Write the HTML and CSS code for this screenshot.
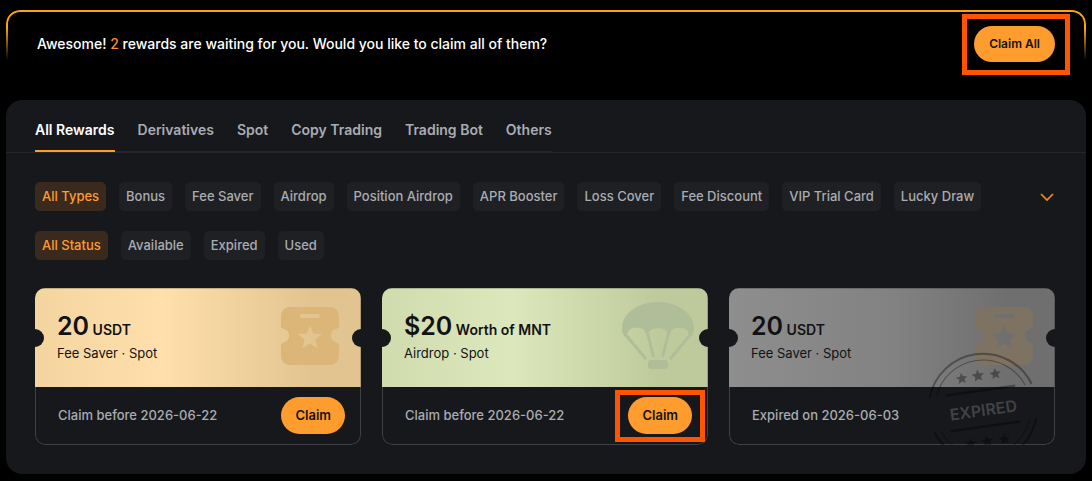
FILE: index.html
```html
<!DOCTYPE html>
<html lang="en">
<head>
    <meta charset="UTF-8">
    <meta name="viewport" content="width=device-width, initial-scale=1.0">
    <title>My Rewards</title>
    <link rel="stylesheet" href="styles.css">
</head>
<body>

    <!-- Shared shapes -->
    <svg class="shapes" width="0" height="0" aria-hidden="true">
        <symbol id="ticket" viewBox="0 0 58 58">
            <path fill-rule="evenodd" d="M9 0H49C54 0 58 4 58 9V19C58 21 57 21.500 55 22C48 24 48 33 55 35.500C57 36 58 37 58 39V49C58 54 54 58 49 58H9C4 58 0 54 0 49V39C0 37 1 36 3 35.500C10 33 10 24 3 22C1 21.500 0 21 0 19V9C0 4 4 0 9 0ZM21 7C18.500 7 18.500 11 21 11H37C39.500 11 39.500 7 37 7ZM29 18.500L32.300 26.500L40.900 27.100L34.400 32.700L36.400 41.100L29 36.600L21.600 41.100L23.600 32.700L17.100 27.100L25.700 26.500Z"/>
        </symbol>
        <symbol id="star" viewBox="-10 -10 20 20">
            <path d="M0 -10L2.650 -3.640L9.510 -3.090L4.280 1.390L5.880 8.090L0 4.500L-5.880 8.090L-4.280 1.390L-9.510 -3.090L-2.650 -3.640Z"/>
        </symbol>
    </svg>

    <section class="banner">
        <p>Awesome! <span class="count">2</span> rewards are waiting for you. Would you like to claim all of them?</p>
        <div class="marked marked-all">
            <button type="button" class="claim claim-all">Claim All</button>
        </div>
    </section>

    <main class="panel">
        <nav class="tabs">
            <div class="tab-list">
                <button type="button" class="tab active">All Rewards</button>
                <button type="button" class="tab">Derivatives</button>
                <button type="button" class="tab">Spot</button>
                <button type="button" class="tab">Copy Trading</button>
                <button type="button" class="tab">Trading Bot</button>
                <button type="button" class="tab">Others</button>
            </div>
        </nav>

        <div class="filters">
            <div class="filter-row">
                <button type="button" class="chip active">All Types</button>
                <button type="button" class="chip">Bonus</button>
                <button type="button" class="chip">Fee Saver</button>
                <button type="button" class="chip">Airdrop</button>
                <button type="button" class="chip">Position Airdrop</button>
                <button type="button" class="chip">APR Booster</button>
                <button type="button" class="chip">Loss Cover</button>
                <button type="button" class="chip">Fee Discount</button>
                <button type="button" class="chip">VIP Trial Card</button>
                <button type="button" class="chip">Lucky Draw</button>
                <button type="button" class="expand" aria-label="Show more types">
                    <svg width="15" height="10" viewBox="0 0 15 10"><path d="M1 2L7 8L13 2" fill="none" stroke="#e8911a" stroke-width="1.700"/></svg>
                </button>
            </div>
            <div class="filter-row">
                <button type="button" class="chip active">All Status</button>
                <button type="button" class="chip">Available</button>
                <button type="button" class="chip">Expired</button>
                <button type="button" class="chip">Used</button>
            </div>
        </div>

        <div class="cards">
            <article class="card">
                <div class="card-top gold">
                    <div class="reward">
                        <h2><span class="amount">20</span> USDT</h2>
                        <p>Fee Saver · Spot</p>
                    </div>
                    <svg class="ticket" width="58" height="58"><use href="#ticket"/></svg>
                </div>
                <div class="card-bottom">
                    <span class="date">Claim before 2026-06-22</span>
                    <button type="button" class="claim">Claim</button>
                </div>
            </article>

            <article class="card">
                <div class="card-top green">
                    <div class="reward">
                        <h2><span class="amount">$20</span> Worth of MNT</h2>
                        <p>Airdrop · Spot</p>
                    </div>
                    <svg class="parachute" width="72" height="68" viewBox="0 0 72 68">
                        <path d="M0 26C0 12 16 0 36 0S72 12 72 26C72 30 71 33 69 35L66.400 31.500C66 24 49 24 48.500 31L46 31C44 24.500 28 24.500 26.500 31L23.500 31C23 24 6 24 5.600 31.500L3 35C1 33 0 30 0 26Z"/>
                        <path class="cables" d="M3 32L24 57M25 29L31.600 55M47 29L40.600 55M69 32L48 57"/>
                        <rect x="26" y="58" width="20" height="9" rx="3.500"/>
                    </svg>
                </div>
                <div class="card-bottom">
                    <span class="date">Claim before 2026-06-22</span>
                    <div class="marked">
                        <button type="button" class="claim">Claim</button>
                    </div>
                </div>
            </article>

            <article class="card expired">
                <div class="card-top gray">
                    <div class="reward">
                        <h2><span class="amount">20</span> USDT</h2>
                        <p>Fee Saver · Spot</p>
                    </div>
                    <svg class="ticket" width="58" height="58"><use href="#ticket"/></svg>
                </div>
                <div class="card-bottom">
                    <span class="date">Expired on 2026-06-03</span>
                </div>
                <svg class="stamp" width="112" height="112" viewBox="-56 -56 112 112">
                    <g transform="rotate(-8)">
                        <g fill="none" stroke="#000" stroke-opacity="0.350">
                            <path stroke-width="2" d="M-51.500 -17A54.200 54.200 0 0 1 51.500 -17M-51.500 17A54.200 54.200 0 0 0 51.500 17"/>
                            <path stroke-width="1" d="M-44.900 -17A48 48 0 0 1 44.900 -17M-44.900 17A48 48 0 0 0 44.900 17"/>
                            <path stroke-width="2.500" d="M-35 -17.500H35M-35 18.500H35"/>
                        </g>
                        <g fill="#000" fill-opacity="0.350">
                            <use href="#star" x="-23" y="-38" width="12" height="12"/>
                            <use href="#star" x="-7" y="-39" width="13" height="13"/>
                            <use href="#star" x="11" y="-38" width="12" height="12"/>
                            <use href="#star" x="-23" y="28" width="12" height="12"/>
                            <use href="#star" x="-7" y="27" width="13" height="13"/>
                            <use href="#star" x="11" y="28" width="12" height="12"/>
                        </g>
                        <text x="0" y="8" text-anchor="middle">EXPIRED</text>
                    </g>
                </svg>
            </article>
        </div>
    </main>

</body>
</html>
```
FILE: styles.css
```css
* {
    box-sizing: border-box;
}

body {
    margin: 0;
    padding: 10px 6px 7px;
    background: #000;
    color: #fff;
    font-family: Inter, "Liberation Sans", sans-serif;
    font-size: 13px;
    font-weight: 500;
}

h2, p {
    margin: 0;
}

button {
    font: inherit;
    border: none;
    padding: 0;
    background: none;
    cursor: pointer;
    white-space: nowrap;
}

.shapes {
    position: absolute;
}

/* Claim all banner */
.banner {
    position: relative;
    display: flex;
    align-items: center;
    justify-content: space-between;
    padding: 16px 31px;
    margin-bottom: 22px;
    font-size: 14px;
}

.banner p {
    padding-bottom: 2px;
}

/* Outline that fades out down the sides */
.banner::before {
    content: "";
    position: absolute;
    inset: 0;
    border: 2px solid #ffa40c;
    border-bottom: none;
    border-radius: 14px 14px 0 0;
    -webkit-mask-image: linear-gradient(#000 18px, transparent 50px);
    mask-image: linear-gradient(#000 18px, transparent 50px);
    pointer-events: none;
}

.count {
    color: #ff8a34;
}

.claim {
    display: block;
    height: 37px;
    padding: 0 14px 2px;
    border-radius: 19px;
    background: #ff9c2e;
    color: #121214;
    font-weight: 600;
}

.claim-all {
    height: 36px;
    padding: 0 15px 2px;
    font-size: 12px;
}

/* Frame drawn round the buttons to press */
.marked {
    position: relative;
}

.marked::after {
    content: "";
    position: absolute;
    inset: -7px -13px -8px;
    border: 5px solid #ff5500;
    pointer-events: none;
}

.marked-all::after {
    inset: -12px -15px -13px -12px;
}

/* Main panel */
.panel {
    background: #17181c;
    border-radius: 16px;
    padding-bottom: 29px;
}

.tabs {
    display: flex;
    padding: 0 29px;
    border-bottom: 1px solid #26272b;
}

.tab-list {
    display: flex;
    gap: 23px;
    border-bottom: 1px solid #26272b;
}

.tab {
    height: 52px;
    margin-bottom: -1px;
    padding-top: 8px;
    border-bottom: 2px solid transparent;
    color: #a9acb2;
    font-size: 14px;
    font-weight: 600;
}

.tab.active {
    color: #fff;
    border-bottom-color: #ff9c2e;
}

.filters {
    display: flex;
    flex-direction: column;
    gap: 20px;
    padding: 29px 31px 28px 29px;
}

.filter-row {
    display: flex;
    gap: 13px;
}

.chip {
    height: 29px;
    padding: 0 7px 2px;
    border-radius: 5px;
    background: #1f2024;
    color: #a9acb2;
}

.chip.active {
    background: #3a2a1e;
    color: #ff9c2e;
}

.expand {
    margin-left: auto;
}

.expand svg {
    display: block;
}

/* Reward cards */
.cards {
    display: grid;
    grid-template-columns: repeat(3, 1fr);
    gap: 21px;
    padding: 0 31px 0 29px;
}

.card {
    position: relative;
    overflow: hidden;
    border-radius: 10px;
}

.card-top {
    position: relative;
    display: flex;
    align-items: flex-start;
    justify-content: space-between;
    height: 99px;
    padding: 0 22px;
    color: #121214;
    box-shadow: inset -1px 1px rgba(0, 0, 0, 0.2);
}

/* Ticket notches */
.card-top::before,
.card-top::after {
    content: "";
    position: absolute;
    top: 41px;
    left: -9px;
    width: 18px;
    height: 18px;
    border-radius: 50%;
    background: #17181c;
}

.card-top::after {
    left: auto;
    right: -9px;
}

.reward {
    padding-top: 22px;
}

.card-top h2 {
    font-size: 14px;
    font-weight: 600;
    line-height: 32px;
}

.card-top p {
    font-weight: 400;
    line-height: 15px;
}

.amount {
    font-size: 25px;
}

.gold {
    background: linear-gradient(90deg, #f4d5a0, #ffe0ac 39%, #e2c490 85%);
}

.green {
    background: linear-gradient(90deg, #d0dcae, #dce7bb 40%, #bfca9c 85%);
}

.gray {
    background: linear-gradient(90deg, #8e8e8e, #828282 50%, #6f6f6f 85%);
}

.ticket {
    margin-top: 19px;
    fill: #dbb678;
}

.gray .ticket {
    fill: #7e7262;
}

.parachute {
    margin-top: 14px;
    margin-right: -8px;
    fill: #afbe98;
}

.cables {
    fill: none;
    stroke: #afbe98;
    stroke-width: 3;
}

.card-bottom {
    display: flex;
    align-items: center;
    justify-content: space-between;
    height: 58px;
    padding: 0 15px 0 22px;
    border: 1px solid #404145;
    border-top: none;
    border-radius: 0 0 10px 10px;
    color: #a9acb2;
}

.date {
    padding-bottom: 2px;
}

.stamp {
    position: absolute;
    right: 16px;
    bottom: -19px;
}

.stamp text {
    fill: #414246;
    font-size: 16px;
    font-weight: 600;
}
```
